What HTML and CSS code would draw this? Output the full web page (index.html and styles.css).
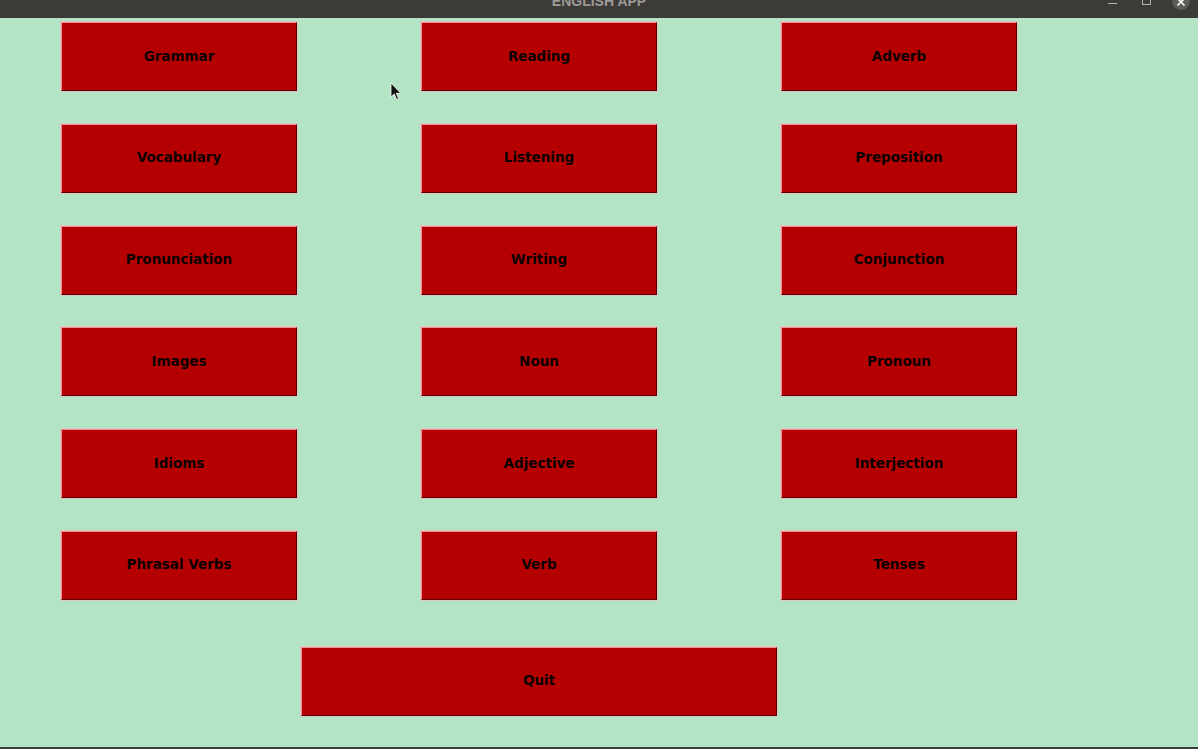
FILE: index.html
```html
<!DOCTYPE html>
<html>
<head>
<meta charset="utf-8">
<link rel="stylesheet" href="styles.css">
</head>
<body>
<div class="window">
  <div class="titlebar">
    <div class="tb-side"></div>
    <div class="tb-title">ENGLISH APP</div>
    <div class="tb-controls">
      <span class="ctl-min"></span>
      <span class="ctl-max"></span>
      <span class="ctl-close">
        <svg width="18" height="18" viewBox="0 0 18 18"><path d="M5.5 6.5 L12.5 13.5 M12.5 6.5 L5.5 13.5" stroke="#fff" stroke-width="1.6" fill="none"/></svg>
      </span>
    </div>
  </div>
  <div class="content">
    <div class="grid">
      <button class="btn">Grammar</button>
      <button class="btn">Reading</button>
      <button class="btn">Adverb</button>
      <button class="btn">Vocabulary</button>
      <button class="btn">Listening</button>
      <button class="btn">Preposition</button>
      <button class="btn">Pronunciation</button>
      <button class="btn">Writing</button>
      <button class="btn">Conjunction</button>
      <button class="btn">Images</button>
      <button class="btn">Noun</button>
      <button class="btn">Pronoun</button>
      <button class="btn">Idioms</button>
      <button class="btn">Adjective</button>
      <button class="btn">Interjection</button>
      <button class="btn">Phrasal Verbs</button>
      <button class="btn">Verb</button>
      <button class="btn">Tenses</button>
    </div>
    <button class="btn quit">Quit</button>
    <svg class="cursor" width="12" height="20" viewBox="0 0 12 20"><path d="M1 1 L1 15 L4.3 12 L6.6 17.5 L8.6 16.6 L6.3 11.3 L10.8 11.3 Z" fill="#111" stroke="#fff" stroke-width="0.8"/></svg>
  </div>
</div>
</body>
</html>
```
FILE: styles.css
```css
html, body {
  margin: 0;
  padding: 0;
}
body {
  width: 1198px;
  height: 749px;
  overflow: hidden;
  background: #b3e4c6;
}
.window {
  width: 1198px;
  height: 749px;
  display: flex;
  flex-direction: column;
  box-sizing: border-box;
  border-bottom: 2px solid #3c3b37;
}
.titlebar {
  height: 18px;
  flex: none;
  background: #3c3b37;
  display: grid;
  grid-template-columns: 1fr auto 1fr;
  overflow: hidden;
}
.tb-title {
  font-family: "Liberation Sans", Arial, sans-serif;
  font-weight: bold;
  font-size: 14px;
  line-height: 14px;
  color: #9b9a96;
  margin-top: -6px;
  white-space: nowrap;
}
.tb-controls {
  justify-self: end;
  display: flex;
  align-items: flex-start;
  padding-right: 8px;
}
.ctl-min {
  width: 9px;
  height: 1px;
  background: #b5b4b0;
  margin-top: 3px;
  margin-right: 25px;
}
.ctl-max {
  width: 7px;
  height: 9px;
  border: 1px solid #b5b4b0;
  margin-top: -6px;
  margin-right: 21px;
}
.ctl-close {
  width: 18px;
  height: 18px;
  border-radius: 50%;
  background: #5d5c58;
  margin-top: -8px;
  display: flex;
}
.content {
  position: relative;
  flex: 1;
  padding: 4px 0 0 61px;
}
.grid {
  display: grid;
  grid-template-columns: repeat(3, 236px);
  grid-auto-rows: 69px;
  column-gap: 124px;
  row-gap: 32.8px;
}
.btn {
  box-sizing: border-box;
  width: 236px;
  height: 69px;
  margin: 0;
  padding: 0 0 2px 0;
  background: #b40000;
  border: 1px solid;
  border-color: #f09090 #560000 #560000 #f09090;
  outline: 1px solid #dcc8c2;
  outline-offset: 0;
  font-family: "DejaVu Sans", sans-serif;
  font-weight: bold;
  font-size: 13.5px;
  color: #0a0000;
  text-align: center;
  cursor: default;
}
.quit {
  display: block;
  width: 476px;
  margin: 47px 0 0 240px;
}
.cursor {
  position: absolute;
  left: 390px;
  top: 64px;
}
```
